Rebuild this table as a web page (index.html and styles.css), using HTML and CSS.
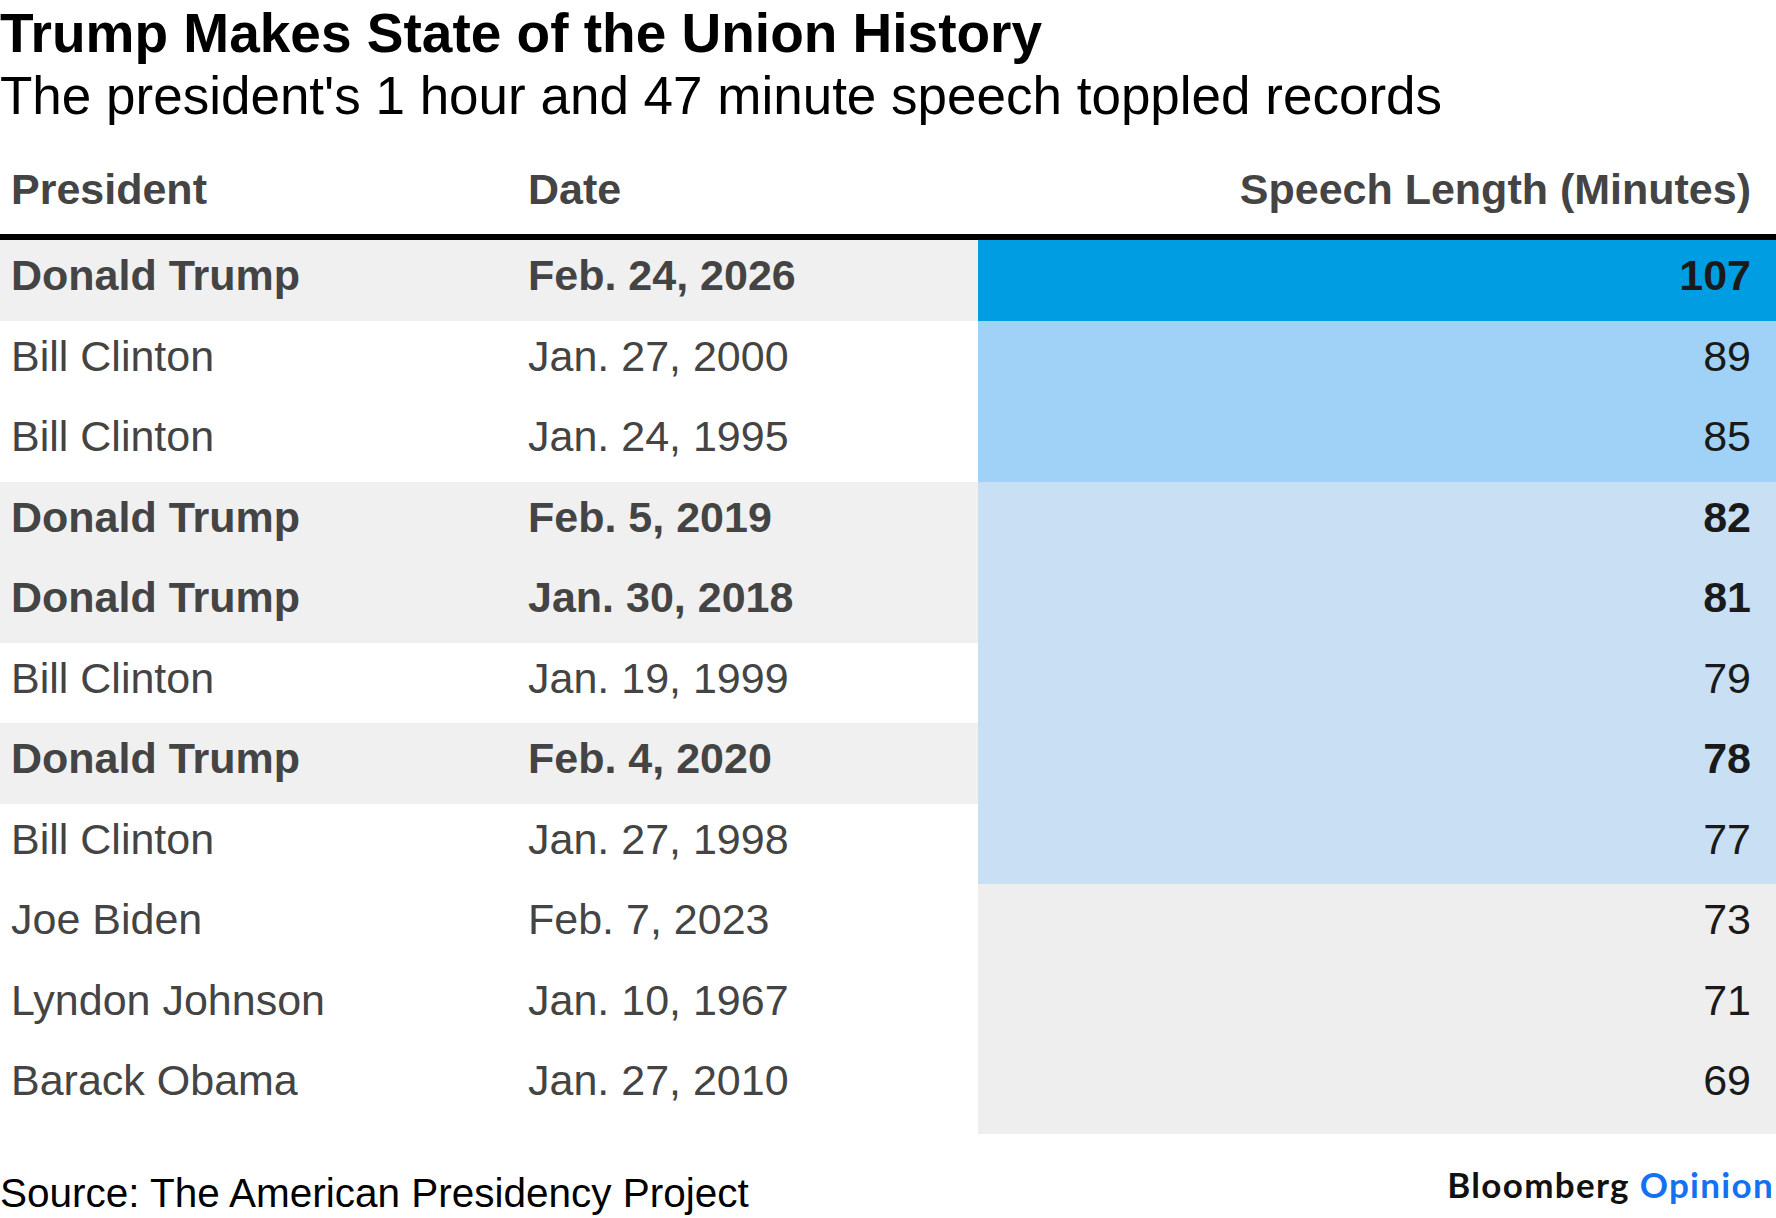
FILE: index.html
```html
<!DOCTYPE html>
<html lang="en">
<head>
<meta charset="utf-8">
<title>Trump Makes State of the Union History</title>
<link rel="stylesheet" href="styles.css">
</head>
<body>
<div class="chart">
  <h1 class="title">Trump Makes State of the Union History</h1>
  <p class="subtitle">The president's 1 hour and 47 minute speech toppled records</p>

  <div class="table">
    <div class="row head">
      <div class="cell">President</div>
      <div class="cell">Date</div>
      <div class="cell num">Speech Length (Minutes)</div>
    </div>
    <div class="row hl">
      <div class="cell">Donald Trump</div>
      <div class="cell">Feb. 24, 2026</div>
      <div class="cell num lvl1">107</div>
    </div>
    <div class="row">
      <div class="cell">Bill Clinton</div>
      <div class="cell">Jan. 27, 2000</div>
      <div class="cell num lvl2">89</div>
    </div>
    <div class="row">
      <div class="cell">Bill Clinton</div>
      <div class="cell">Jan. 24, 1995</div>
      <div class="cell num lvl2">85</div>
    </div>
    <div class="row hl">
      <div class="cell">Donald Trump</div>
      <div class="cell">Feb. 5, 2019</div>
      <div class="cell num lvl3">82</div>
    </div>
    <div class="row hl">
      <div class="cell">Donald Trump</div>
      <div class="cell">Jan. 30, 2018</div>
      <div class="cell num lvl3">81</div>
    </div>
    <div class="row">
      <div class="cell">Bill Clinton</div>
      <div class="cell">Jan. 19, 1999</div>
      <div class="cell num lvl3">79</div>
    </div>
    <div class="row hl">
      <div class="cell">Donald Trump</div>
      <div class="cell">Feb. 4, 2020</div>
      <div class="cell num lvl3">78</div>
    </div>
    <div class="row">
      <div class="cell">Bill Clinton</div>
      <div class="cell">Jan. 27, 1998</div>
      <div class="cell num lvl3">77</div>
    </div>
    <div class="row">
      <div class="cell">Joe Biden</div>
      <div class="cell">Feb. 7, 2023</div>
      <div class="cell num lvl4">73</div>
    </div>
    <div class="row">
      <div class="cell">Lyndon Johnson</div>
      <div class="cell">Jan. 10, 1967</div>
      <div class="cell num lvl4">71</div>
    </div>
    <div class="row last">
      <div class="cell">Barack Obama</div>
      <div class="cell">Jan. 27, 2010</div>
      <div class="cell num lvl4">69</div>
    </div>
  </div>

  <div class="footer">
    <div class="source">Source: The American Presidency Project</div>
    <div class="logo"><span class="brand">Bloomberg</span> <span class="opinion">Opinion</span></div>
  </div>
</div>
</body>
</html>
```
FILE: styles.css
```css
html, body {
  margin: 0;
  padding: 0;
  background: #ffffff;
}

body {
  font-family: "Liberation Sans", Arial, sans-serif;
  color: #000;
}

.chart {
  width: 1776px;
  padding-top: 3px;
}

.title {
  margin: 0;
  font-size: 55px;
  line-height: 60px;
  font-weight: 700;
  letter-spacing: 0;
  color: #000;
}

.subtitle {
  margin: 0;
  font-size: 53px;
  line-height: 66px;
  font-weight: 400;
  color: #000;
}

.table {
  display: flex;
  flex-direction: column;
}

.row {
  display: grid;
  grid-template-columns: 517px 461px 1fr;
  height: 80.5px;
  font-size: 43px;
  color: #444;
}

.row.last {
  height: 88.5px;
}

.cell {
  padding: 0 0 9px 11px;
  line-height: 71px;
  white-space: nowrap;
}

.cell.num {
  text-align: right;
  padding-left: 0;
  padding-right: 25px;
  color: #1a1a1a;
}

.row.head {
  height: auto;
  padding-top: 35px;
  padding-bottom: 20px;
  border-bottom: 6px solid #000;
  font-weight: 700;
  color: #444;
}

.row.head .cell {
  line-height: 50px;
  padding-bottom: 0;
}

.row.head .cell.num {
  color: #444;
}

.row.hl {
  background: #f0f0f0;
  font-weight: 700;
}

.lvl1 { background: #009de2; color: #111; }
.lvl2 { background: #a0d2f7; }
.lvl3 { background: #c9e0f4; }
.lvl4 { background: #eeeeee; }

.footer {
  display: flex;
  justify-content: space-between;
  align-items: baseline;
  margin-top: 34px;
}

.source {
  font-size: 40.5px;
  line-height: 50px;
  color: #000;
}

.logo {
  font-family: Lato, "Liberation Sans", sans-serif;
  font-weight: 700;
  font-size: 35px;
  letter-spacing: 1.3px;
  line-height: 40px;
  padding-right: 2px;
  position: relative;
  top: -9px;
}

.brand { color: #111; }
.opinion { color: #1371f2; }
```
